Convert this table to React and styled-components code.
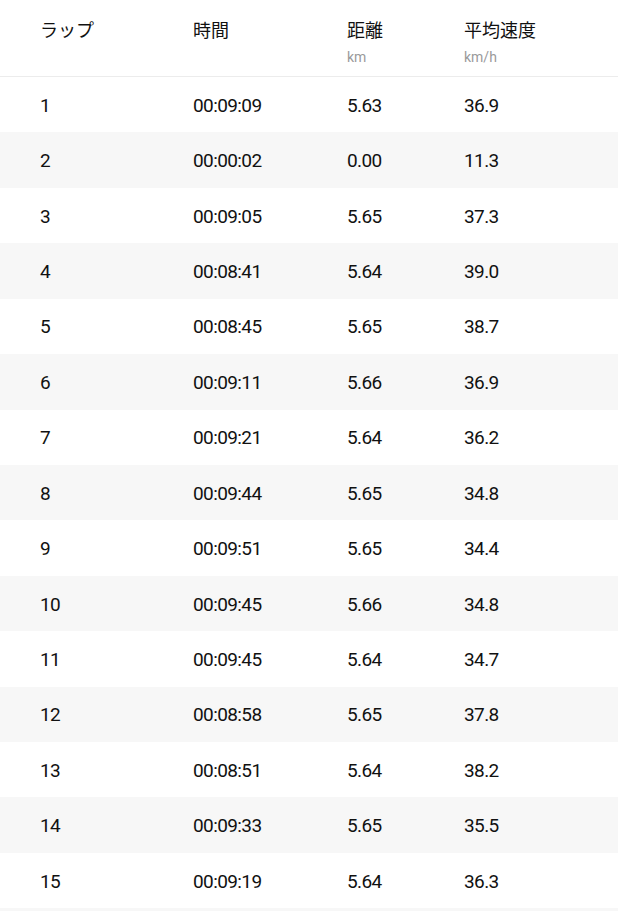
import React from 'react';
import styled, { createGlobalStyle } from 'styled-components';

const GlobalStyle = createGlobalStyle`
  body {
    margin: 0;
    background: #fff;
    font-family: Roboto, "Noto Sans CJK JP", sans-serif;
    color: #111;
  }
`

const laps = [
  ['1', '00:09:09', '5.63', '36.9'],
  ['2', '00:00:02', '0.00', '11.3'],
  ['3', '00:09:05', '5.65', '37.3'],
  ['4', '00:08:41', '5.64', '39.0'],
  ['5', '00:08:45', '5.65', '38.7'],
  ['6', '00:09:11', '5.66', '36.9'],
  ['7', '00:09:21', '5.64', '36.2'],
  ['8', '00:09:44', '5.65', '34.8'],
  ['9', '00:09:51', '5.65', '34.4'],
  ['10', '00:09:45', '5.66', '34.8'],
  ['11', '00:09:45', '5.64', '34.7'],
  ['12', '00:08:58', '5.65', '37.8'],
  ['13', '00:08:51', '5.64', '38.2'],
  ['14', '00:09:33', '5.65', '35.5'],
  ['15', '00:09:19', '5.64', '36.3'],
];

const Table = styled.div`
  width: 618px;
  background: #f7f7f7;
  padding-bottom: 3px;
`

const Grid = styled.div`
  display: grid;
  grid-template-columns: 153px 154px 117px 1fr;
  padding-left: 40px;
`

const Header = styled(Grid)`
  height: 77px;
  background: #fff;
  border-bottom: 1px solid #ececec;
  box-sizing: border-box;
  padding-top: 16px;
`

const HeadCell = styled.div`
  display: flex;
  flex-direction: column;
`

const Title = styled.span`
  font-family: "Noto Sans CJK JP", sans-serif;
  font-size: 18px;
  line-height: 26px;
  color: #111;
`

const Unit = styled.span`
  font-size: 14px;
  line-height: 18px;
  margin-top: 6px;
  color: #9a9a9a;
`

const Row = styled(Grid)`
  height: 55.43px;
  align-items: center;
  background: ${p => (p.$shaded ? '#f7f7f7' : '#fff')};
`

const Cell = styled.div`
  font-size: 19px;
  letter-spacing: -0.6px;
  color: #111;
  padding-top: 1px;
`

export default function App() {
  return (
    <Table>
      <GlobalStyle />
      <Header>
        <HeadCell><Title>ラップ</Title></HeadCell>
        <HeadCell><Title>時間</Title></HeadCell>
        <HeadCell><Title>距離</Title><Unit>km</Unit></HeadCell>
        <HeadCell><Title>平均速度</Title><Unit>km/h</Unit></HeadCell>
      </Header>
      {laps.map((lap, i) => (
        <Row key={lap[0]} $shaded={i % 2 === 1}>
          {lap.map((v, j) => <Cell key={j}>{v}</Cell>)}
        </Row>
      ))}
    </Table>
  );
}
